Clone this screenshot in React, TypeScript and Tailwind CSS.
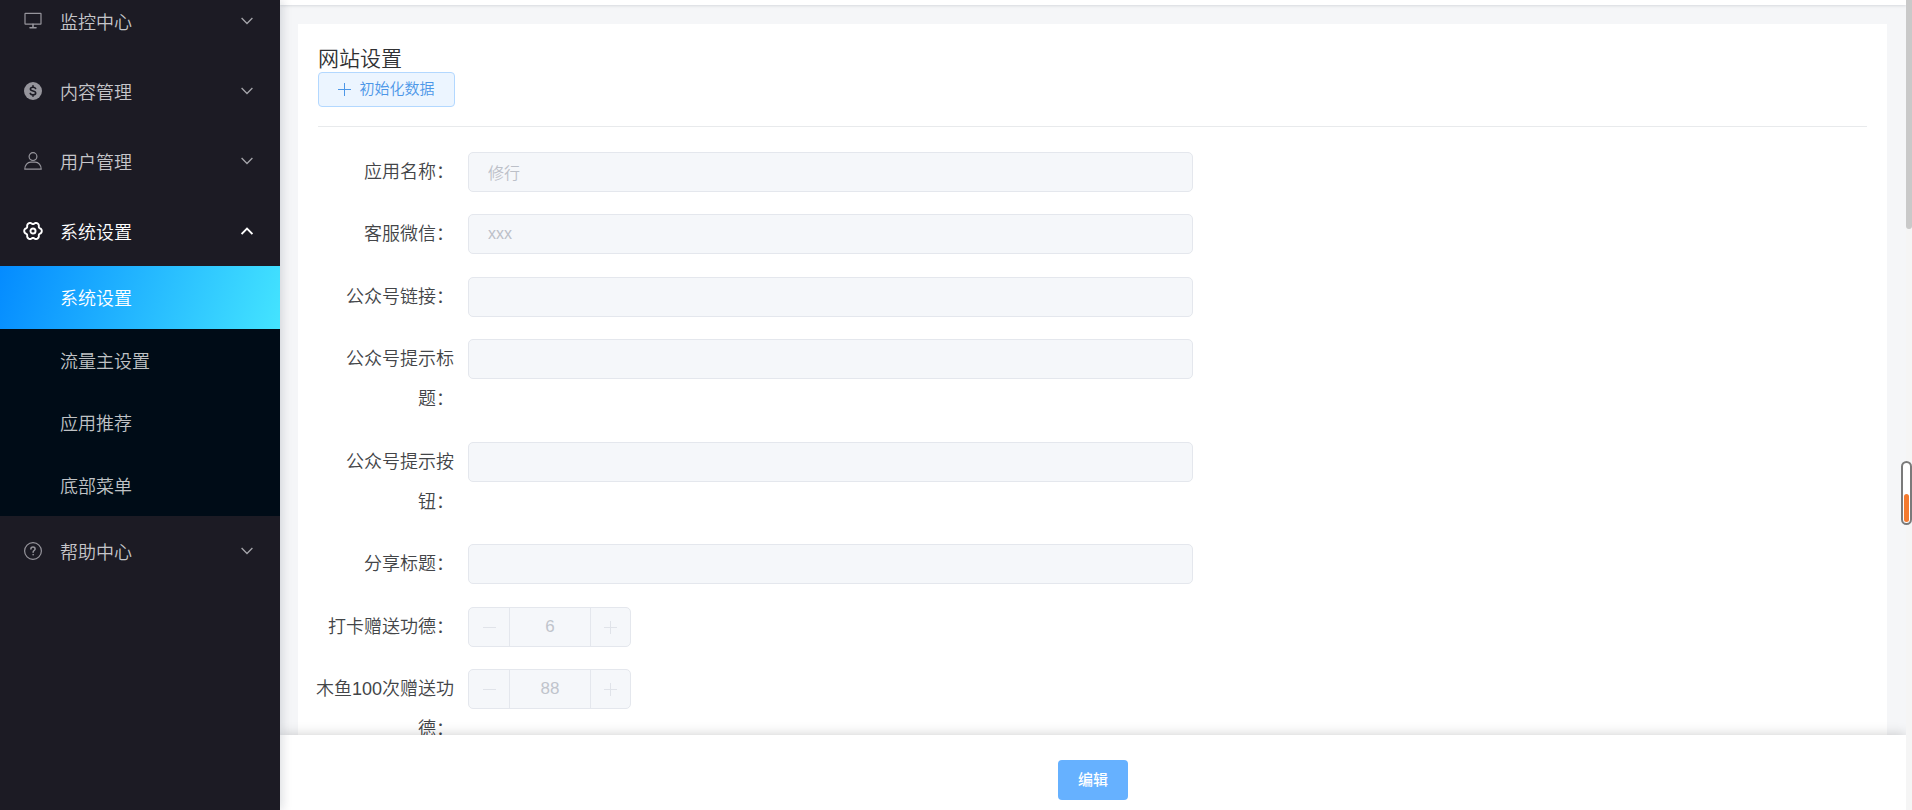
import type { ReactNode } from "react";

const FONT = "font-['Liberation_Sans','Noto_Sans_CJK_SC',sans-serif]";

function Svg({ children, size = 18, width = 1 }: { children: ReactNode; size?: number; width?: number }) {
  return (
    <svg
      width={size}
      height={size}
      viewBox="0 0 18 18"
      fill="none"
      stroke="currentColor"
      strokeWidth={width}
      strokeLinecap="round"
      strokeLinejoin="round"
      aria-hidden="true"
      className="shrink-0"
    >
      {children}
    </svg>
  );
}

const MonitorIcon = () => (
  <Svg width={1.2}>
    <rect x="1" y="1.4" width="16" height="10.8" rx="0.4" />
    <path d="M9 12.2v3" strokeWidth={1.6} />
    <path d="M6 15.8h6" strokeWidth={1.6} />
  </Svg>
);

const CoinIcon = () => (
  <Svg width={1.8}>
    <circle cx="9" cy="9" r="9" fill="currentColor" stroke="none" />
    <path
      d="M11.6 6.5C11.2 5.6 10.2 5.2 9 5.2c-1.5 0-2.6.6-2.6 1.8 0 2.7 5.3 1.2 5.3 4 0 1.2-1.2 1.9-2.7 1.9-1.3 0-2.4-.5-2.8-1.5M9 3.8v1.4M9 12.9v1.3"
      stroke="#1c1b24"
      strokeWidth={1.6}
    />
  </Svg>
);

const UserIcon = () => (
  <Svg width={1.2}>
    <circle cx="9" cy="4.6" r="3.9" />
    <path d="M.8 17.200c0-4.300 2.700-7 6-7h4.400c3.300 0 6 2.700 6 7z" />
  </Svg>
);

// Six-lobed gear outline, sampled from a polar curve.
const GEAR_POINTS = Array.from({ length: 120 }, (_, i) => {
  const t = (i / 120) * 2 * Math.PI;
  const r = 7.2 + 0.85 * Math.cos(6 * t) - 0.15 * Math.cos(12 * t);
  return `${(9 + r * Math.cos(t)).toFixed(2)},${(9 + r * Math.sin(t)).toFixed(2)}`;
}).join(" ");

const GearIcon = () => (
  <Svg size={20} width={1.7}>
    <polygon points={GEAR_POINTS} />
    <circle cx="9" cy="9" r="2.3" />
  </Svg>
);

const HelpIcon = () => (
  <Svg width={1.2}>
    <circle cx="9" cy="9" r="8.4" />
    <path d="M6.900 7.100c0-1.300.9-2 2.100-2s2.100.8 2.100 1.900c0 1.500-2 1.500-2 3.200" strokeWidth={1.5} />
    <circle cx="9.1" cy="12.7" r=".5" fill="currentColor" strokeWidth={0.6} />
  </Svg>
);

function Chevron({ up = false }: { up?: boolean }) {
  return (
    <svg
      width="12"
      height="8"
      viewBox="0 0 12 8"
      fill="none"
      stroke="currentColor"
      strokeWidth={up ? 1.8 : 1.3}
      aria-hidden="true"
      className={up ? "text-white" : "text-[#a5a5aa]"}
    >
      <path d={up ? "M.6 7 6 1.500 11.400 7" : "M.6 1 6 6.500 11.400 1"} />
    </svg>
  );
}

function MenuItem({ icon, label, open = false }: { icon: ReactNode; label: string; open?: boolean }) {
  return (
    <button
      type="button"
      aria-expanded={open}
      className={`flex h-[70px] w-full items-center pr-[27px] pl-[23px] text-left text-[18px] ${
        open ? "text-white" : "text-[#c6c6ca]"
      }`}
    >
      <span className={`flex w-5 justify-center ${open ? "text-white" : "text-[#96959c]"}`}>{icon}</span>
      <span className="ml-[17px] flex-1 pt-1">{label}</span>
      <Chevron up={open} />
    </button>
  );
}

const SUB_ITEMS = ["系统设置", "流量主设置", "应用推荐", "底部菜单"];

function Sidebar() {
  return (
    <nav className="z-10 w-[280px] shrink-0 overflow-hidden bg-[#1c1b24] shadow-[2px_0_10px_rgba(0,21,41,0.15)]">
      <div className="-mt-[14px]">
        <MenuItem icon={<MonitorIcon />} label="监控中心" />
        <MenuItem icon={<CoinIcon />} label="内容管理" />
        <MenuItem icon={<UserIcon />} label="用户管理" />
        <MenuItem icon={<GearIcon />} label="系统设置" open />
        <ul className="bg-[#000c17]">
          {SUB_ITEMS.map((label, i) => (
            <li key={label} className="odd:h-[63px] even:h-[62px]">
              <a
                href="#"
                className={`flex h-full items-center pt-1 pl-[60px] text-[18px] ${
                  i === 0 ? "bg-[linear-gradient(108deg,#048bff,#44e4ff)] text-white" : "text-[#bfc2c5]"
                }`}
              >
                {label}
              </a>
            </li>
          ))}
        </ul>
        <MenuItem icon={<HelpIcon />} label="帮助中心" />
      </div>
    </nav>
  );
}

type Field = { id: string; label: string; value: string; kind?: "number" };

const FIELDS: Field[] = [
  { id: "name", label: "应用名称：", value: "修行" },
  { id: "wechat", label: "客服微信：", value: "xxx" },
  { id: "link", label: "公众号链接：", value: "" },
  { id: "tip-title", label: "公众号提示标题：", value: "" },
  { id: "tip-button", label: "公众号提示按钮：", value: "" },
  { id: "share-title", label: "分享标题：", value: "" },
  { id: "checkin", label: "打卡赠送功德：", value: "6", kind: "number" },
  { id: "woodfish", label: "木鱼100次赠送功德：", value: "88", kind: "number" },
];

function Stepper({ id, value }: { id: string; value: string }) {
  return (
    <div className="flex h-10 w-[163px] overflow-hidden rounded-[5px] border border-[#e4e7ed] bg-[#f5f7fa] text-[#e0e3e9]">
      <button type="button" disabled aria-label="减少" className="flex w-[41px] items-center justify-center border-r border-[#e4e7ed]">
        <svg width="13" height="13" viewBox="0 0 13 13" stroke="currentColor" aria-hidden="true">
          <path d="M0 6.500h13" />
        </svg>
      </button>
      <input id={id} disabled value={value} readOnly className="w-0 min-w-0 flex-1 bg-transparent text-center text-[17px] text-[#c0c4cc]" />
      <button type="button" disabled aria-label="增加" className="flex w-10 items-center justify-center border-l border-[#e4e7ed]">
        <svg width="13" height="13" viewBox="0 0 13 13" stroke="currentColor" aria-hidden="true">
          <path d="M0 6.500h13M6.500 0v13" />
        </svg>
      </button>
    </div>
  );
}

function FormRow({ id, label, value, kind }: Field) {
  return (
    <div className="flex items-start odd:mb-[22px] even:mb-[23px]">
      <label htmlFor={id} className="w-[154px] shrink-0 pr-[14px] text-right text-[18px] leading-10 break-all text-[#434548]">
        {label}
      </label>
      {kind === "number" ? (
        <Stepper id={id} value={value} />
      ) : (
        <input
          id={id}
          disabled
          readOnly
          value={value}
          className="h-10 min-w-0 flex-1 rounded-[5px] border border-[#e4e7ed] bg-[#f5f7fa] px-[19px] text-[16px] text-[#bcc0c8]"
        />
      )}
    </div>
  );
}

export default function App() {
  return (
    <div className={`relative flex h-screen overflow-hidden bg-[#f5f6f8] font-[350] ${FONT}`}>
      <Sidebar />
      <div className="flex min-w-0 flex-1 flex-col">
        <header className="h-[5px] shrink-0 bg-white shadow-[0_1px_3px_rgba(0,21,41,0.12)]" />
        <main className="min-h-0 flex-1 overflow-y-auto pt-[19px] pr-[19px] pl-[18px] [scrollbar-width:none]">
          <section className="bg-white px-5 pt-5 pb-5">
            <div className="border-b border-[#e8eaec] pb-[19px]">
              <h1 className="pt-[2px] text-[21px] leading-[26px] font-[350] text-[#303133]">网站设置</h1>
              <button
                type="button"
                className="flex h-[35px] w-[137px] items-center justify-center gap-2 rounded-[4px] border border-[#b3d8ff] bg-[#ecf5ff] text-[15px] text-[#4c97e8]"
              >
                <svg width="13" height="13" viewBox="0 0 13 13" stroke="currentColor" aria-hidden="true">
                  <path d="M0 6.500h13M6.500 0v13" />
                </svg>
                初始化数据
              </button>
            </div>
            <form className="-ml-1 max-w-[879px] pt-[25px]">
              {FIELDS.map((f) => (
                <FormRow key={f.id} {...f} />
              ))}
            </form>
          </section>
        </main>
        <footer className="z-[1] flex h-[75px] shrink-0 justify-center bg-white pt-[25px] shadow-[0_0_12px_rgba(0,0,0,0.2)]">
          <button type="button" className="h-10 w-[70px] rounded-[4px] bg-[#66b1ff] text-[15px] font-medium text-white">
            编辑
          </button>
        </footer>
      </div>
      <div className="z-[2] w-[6px] shrink-0 bg-[#f5f5f5]">
        <div className="h-[229px] rounded-b-[3px] bg-[#c9c9c9]" />
      </div>
      <div className="absolute top-[461px] right-0 z-[3] flex h-16 w-[11px] items-end rounded-full border-2 border-[#7a7a7a] bg-white p-px">
        <div className="h-7 w-full rounded-full bg-[#f47a2f]" />
      </div>
    </div>
  );
}
